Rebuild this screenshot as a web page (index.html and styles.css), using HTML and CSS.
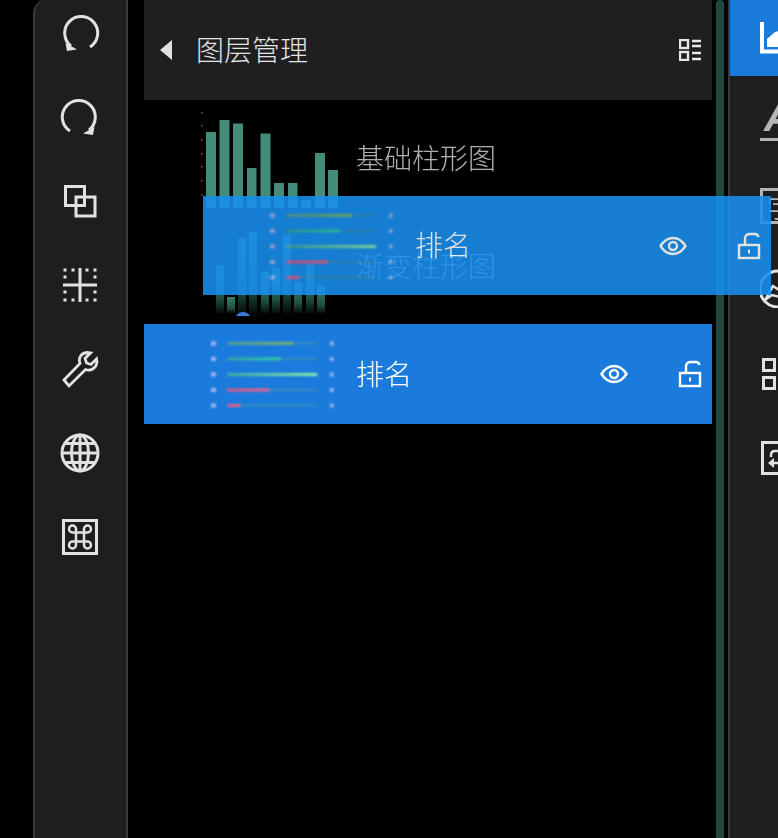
FILE: index.html
```html
<!DOCTYPE html>
<html lang="zh">
<head>
<meta charset="utf-8">
<title>图层管理</title>
<link rel="stylesheet" href="styles.css">
</head>
<body>
<svg class="defs" width="0" height="0" aria-hidden="true">
  <defs>
    <linearGradient id="g1" x1="0" x2="1" y1="0" y2="0"><stop offset="0" stop-color="#4f9f9a"/><stop offset="1" stop-color="#80b860"/></linearGradient>
    <linearGradient id="g2" x1="0" x2="1" y1="0" y2="0"><stop offset="0" stop-color="#3ba0a0"/><stop offset="1" stop-color="#2fd8a0"/></linearGradient>
    <linearGradient id="g3" x1="0" x2="1" y1="0" y2="0"><stop offset="0" stop-color="#3fa8a8"/><stop offset="1" stop-color="#90f0b0"/></linearGradient>
    <linearGradient id="g4" x1="0" x2="1" y1="0" y2="0"><stop offset="0" stop-color="#d8588c"/><stop offset="1" stop-color="#f0608c"/></linearGradient>
    <linearGradient id="fade" x1="0" x2="0" y1="0" y2="1"><stop offset="0" stop-color="#38806e"/><stop offset=".7" stop-color="#1f4f42"/><stop offset="1" stop-color="#050d0b"/></linearGradient>
    <filter id="soft" x="-5%" y="-5%" width="110%" height="110%"><feGaussianBlur stdDeviation=".8"/></filter>

    <symbol id="rank" viewBox="0 0 140 100">
      <g filter="url(#soft)">
        <g fill="#a4b4ee">
          <rect x="11" y="17.500" width="5" height="4"/><rect x="11" y="33" width="5" height="4"/><rect x="11" y="48.500" width="5" height="4"/><rect x="11" y="64" width="5" height="4"/><rect x="11" y="79.500" width="5" height="4"/>
          <rect x="130" y="17.500" width="3.500" height="4"/><rect x="130" y="33" width="3.500" height="4"/><rect x="130" y="48.500" width="3.500" height="4"/><rect x="130" y="64" width="3.500" height="4"/><rect x="130" y="79.500" width="3.500" height="4"/>
        </g>
        <g fill="#3f8fb0">
          <rect x="27" y="18.500" width="90" height="1.600"/><rect x="27" y="34" width="90" height="1.600"/><rect x="27" y="65" width="90" height="1.600"/><rect x="27" y="80.500" width="90" height="1.600"/>
        </g>
        <rect x="27" y="18" width="66" height="2.800" fill="url(#g1)"/>
        <rect x="27" y="33.500" width="54" height="2.800" fill="url(#g2)"/>
        <rect x="27" y="49" width="90" height="3" fill="url(#g3)"/>
        <rect x="27" y="64.500" width="42" height="3" fill="url(#g4)"/>
        <rect x="27" y="80" width="13" height="3" fill="url(#g4)"/>
      </g>
    </symbol>

    <symbol id="eye" viewBox="0 0 28 20">
      <path d="M1.500 10C5 4.500 9 2 14 2s9 2.500 12.500 8C23 15.500 19 18 14 18S5 15.500 1.500 10Z" fill="none" stroke="currentColor" stroke-width="2.400"/>
      <circle cx="14" cy="10" r="4" fill="none" stroke="currentColor" stroke-width="2.400"/>
    </symbol>

    <symbol id="lock" viewBox="0 0 24 28">
      <path d="M8 13V6.500C8 3.500 10 2 13 2h5c2 0 3 1 3.500 3" fill="none" stroke="currentColor" stroke-width="2.400"/>
      <rect x="2" y="13" width="20" height="13" fill="none" stroke="currentColor" stroke-width="2.400"/>
      <rect x="11" y="17.500" width="2" height="4" fill="currentColor"/>
    </symbol>
  </defs>
</svg>

<nav class="toolbar">
  <svg class="tool" viewBox="0 0 40 40"><path d="M30 34A16.500 16.500 0 1 0 11 33" class="ln"/><path d="M5.500 30L17 36.500L7 38Z" class="fl"/></svg>
  <svg class="tool" viewBox="0 0 40 40"><path d="M10 34A16.500 16.500 0 1 1 29 33" class="ln"/><path d="M34.500 30L23 36.500L33 38Z" class="fl"/></svg>
  <svg class="tool" viewBox="0 0 40 40"><rect x="5.500" y="5.500" width="19" height="19" class="ln"/><rect x="16" y="16" width="19" height="19" class="ln"/></svg>
  <svg class="tool" viewBox="0 0 40 40"><path d="M20 3V37M3 20H37" class="ln"/><path d="M3.500 5H6.500M11.500 5H14.500M25.500 5H28.500M33.500 5H36.500M3.500 12H6.500M33.500 12H36.500M3.500 27H6.500M33.500 27H36.500M3.500 35H6.500M11.500 35H14.500M25.500 35H28.500M33.500 35H36.500" class="ln"/></svg>
  <svg class="tool" viewBox="0 0 40 40"><path d="M4 31L20 14.500C18 9 21 4 27 3.500L30.500 4L25 9.500L26.500 14L31 15.500L36.500 10L37 13C36.500 19 31 22.500 25.500 20.500L9 37Z" class="ln joined"/></svg>
  <svg class="tool" viewBox="0 0 40 40"><circle cx="20" cy="20" r="18" class="ln"/><ellipse cx="20" cy="20" rx="8.500" ry="18" class="ln"/><path d="M20 2V38M2 20H38M5 10.500H35M5 29.500H35" class="ln"/></svg>
  <svg class="tool" viewBox="0 0 40 40"><rect x="3.500" y="3.500" width="33" height="33" class="ln"/><path d="M16 16V12A3.500 3.500 0 1 0 12.500 15.500H27.500A3.500 3.500 0 1 0 24 12V28A3.500 3.500 0 1 0 27.500 24.500H12.500A3.500 3.500 0 1 0 16 28Z" class="ln thin"/></svg>
</nav>

<main class="panel">
  <header class="panel-head">
    <span class="back"></span>
    <h1 class="panel-title">图层管理</h1>
    <svg class="list-icon" viewBox="0 0 22 22"><rect x="1" y="1" width="8" height="8" class="ln2"/><rect x="1" y="13" width="8" height="8" class="ln2"/><path d="M13 2H22M13 7H22M13 14H22M13 20H22" class="ln2"/></svg>
  </header>

  <ul class="layers">
    <li class="layer">
      <svg class="thumb" viewBox="0 0 140 100">
        <g fill="#5a6a66"><rect x="1" y="4" width="1.500" height="1.500"/><rect x="1" y="17" width="1.500" height="1.500"/><rect x="1" y="31" width="1.500" height="1.500"/><rect x="1" y="45" width="1.500" height="1.500"/><rect x="1" y="58" width="1.500" height="1.500"/><rect x="1" y="72" width="1.500" height="1.500"/><rect x="1" y="86" width="1.500" height="1.500"/></g>
        <g fill="#438c79">
          <rect x="6" y="24" width="10" height="76"/><rect x="19.500" y="12" width="10" height="88"/><rect x="33" y="15.500" width="10" height="84.500"/><rect x="47" y="60" width="9.500" height="40"/><rect x="60.500" y="25.500" width="10" height="74.500"/><rect x="74" y="75" width="10" height="25"/><rect x="88" y="75" width="9.500" height="25"/><rect x="101.500" y="92" width="9.500" height="8"/><rect x="115" y="45" width="10" height="55"/><rect x="128" y="62" width="10" height="38"/>
        </g>
      </svg>
      <span class="layer-name">基础柱形图</span>
    </li>
    <li class="layer">
      <svg class="thumb" viewBox="0 0 140 100">
        <defs><clipPath id="c"><rect width="140" height="100"/></clipPath></defs>
        <g clip-path="url(#c)">
          <g fill="url(#fade)">
            <rect x="16" y="49" width="8" height="48"/><rect x="27" y="81" width="8" height="16"/><rect x="38" y="22" width="8" height="75"/><rect x="49" y="16" width="8" height="81"/><rect x="61" y="56" width="8" height="41"/><rect x="72" y="52" width="8" height="45"/><rect x="83" y="19" width="8" height="78"/><rect x="94" y="66" width="8" height="31"/><rect x="106" y="49" width="8" height="48"/><rect x="117" y="70" width="8" height="27"/>
          </g>
          <circle cx="43" cy="104" r="8" fill="#3b7be0"/>
        </g>
      </svg>
      <span class="layer-name">渐变柱形图</span>
    </li>
    <li class="layer selected">
      <svg class="thumb"><use href="#rank"/></svg>
      <span class="layer-name">排名</span>
      <svg class="eye"><use href="#eye"/></svg>
      <svg class="lock"><use href="#lock"/></svg>
    </li>
  </ul>
</main>

<div class="scrollbar"></div>

<aside class="sidebar">
  <div class="side-item active">
    <svg class="side-icon" viewBox="0 0 40 40"><path d="M2 4V33.500H40" class="ln white"/><path d="M7 29V21L15 14L22 12L40 12V29Z" fill="#fff"/></svg>
  </div>
  <div class="side-item">
    <span class="side-a">A</span>
  </div>
  <div class="side-item">
    <span class="side-zi">字</span>
  </div>
  <div class="side-item">
    <svg class="side-icon" viewBox="0 0 40 40"><circle cx="18" cy="21" r="18" class="ln"/><path d="M5 32L13 18L19 22L25 14L20 29L12 27Z" class="ln thin"/></svg>
  </div>
  <div class="side-item">
    <svg class="side-icon" viewBox="0 0 40 40"><rect x="3.500" y="7.500" width="11" height="11" class="ln"/><rect x="3.500" y="25.500" width="11" height="11" class="ln"/></svg>
  </div>
  <div class="side-item">
    <svg class="side-icon" viewBox="0 0 40 40"><rect x="2.500" y="6.500" width="34" height="31" class="ln"/><path d="M28 15H15Q11 15 11 19V21M11 27H28" class="ln thin"/><path d="M8 27L14 22V32Z" class="fl"/></svg>
  </div>
</aside>

<div class="layer ghost">
  <svg class="thumb"><use href="#rank"/></svg>
  <span class="layer-name">排名</span>
  <svg class="eye"><use href="#eye"/></svg>
  <svg class="lock"><use href="#lock"/></svg>
</div>
</body>
</html>
```

FILE: styles.css
```css
* { box-sizing: border-box; }

html, body {
  margin: 0;
  height: 100%;
}

body {
  position: relative;
  display: flex;
  width: 778px;
  height: 838px;
  overflow: hidden;
  background: #000;
  font-family: "Noto Sans CJK SC", "Noto Sans", sans-serif;
  filter: blur(.35px);
}

.defs { position: absolute; }

.ln { fill: none; stroke: #e2e2e2; stroke-width: 3; }
.ln.thin { stroke-width: 2.500; }
.ln.joined { stroke-width: 2.800; }
.ln.white { stroke: #fff; stroke-width: 4; }
.ln2 { fill: none; stroke: #e8e8e8; stroke-width: 2.400; }
.fl { fill: #e2e2e2; }

.toolbar {
  flex: none;
  display: flex;
  flex-direction: column;
  align-items: flex-start;
  gap: 44px;
  width: 95px;
  height: 842px;
  margin: -2px 0 0 33px;
  padding: 15px 0 0 25px;
  background: #1e1e1e;
  border-left: 2px solid #3b3b3b;
  border-right: 2px solid #3b3b3b;
  border-top-left-radius: 16px;
}

.tool { flex: none; width: 40px; height: 40px; }

.panel {
  flex: none;
  width: 568px;
  margin-left: 16px;
}

.panel-head {
  display: flex;
  align-items: center;
  height: 100px;
  padding: 0 11px 0 16px;
  background: #1f1f1f;
}

.back {
  width: 0;
  height: 0;
  border-top: 10px solid transparent;
  border-bottom: 10px solid transparent;
  border-right: 12px solid #e0e0e0;
}

.panel-title {
  margin: 0 0 3px 24px;
  font-size: 28px;
  font-weight: 300;
  line-height: 40px;
  color: #e4e4e4;
}

.list-icon { width: 22px; height: 22px; margin-left: auto; }

.layers {
  display: flex;
  flex-direction: column;
  gap: 8px;
  margin: 8px 0 0;
  padding: 0;
  list-style: none;
}

.layer {
  display: flex;
  align-items: center;
  width: 568px;
  height: 100px;
  padding: 0 10px 0 56px;
  color: #b0b0b0;
}

.thumb { flex: none; width: 140px; height: 100px; margin-right: 16px; }

.layer-name {
  margin-bottom: 3px;
  font-size: 28px;
  font-weight: 300;
  line-height: 40px;
}

.selected { background: #1b7bdc; color: #fff; }

.eye { width: 28px; height: 20px; margin-left: auto; color: #fff; }
.lock { width: 24px; height: 28px; margin-left: 50px; color: #fff; }

.scrollbar {
  flex: none;
  width: 8px;
  margin-left: 4px;
  background: #1f4a40;
  border-radius: 4px 4px 0 0;
}

.sidebar {
  flex: none;
  width: 50px;
  height: 838px;
  margin-left: 4px;
  overflow: hidden;
  background: #1e1e1e;
  border-left: 2px solid #3b3b3b;
}

.side-item {
  display: flex;
  align-items: center;
  height: 84px;
  padding-left: 30px;
  color: #b4b4b4;
}

.side-item.active {
  height: 76px;
  background: #1b7bdc;
}

.side-item.active + .side-item { margin-top: 2px; }

.side-icon { flex: none; width: 40px; height: 40px; }

.side-a {
  flex: none;
  width: 48px;
  height: 42px;
  margin-top: -1px;
  padding-left: 4px;
  font-family: "Liberation Sans", sans-serif;
  font-size: 42px;
  font-style: italic;
  font-weight: 700;
  line-height: 36px;
  color: #b4b4b4;
  border-bottom: 3px solid #b4b4b4;
}

.side-zi {
  flex: none;
  width: 40px;
  height: 36px;
  margin-top: 4px;
  font-size: 26px;
  line-height: 32px;
  text-align: center;
  color: #b4b4b4;
  border: 3px solid #b4b4b4;
}

.ghost {
  position: absolute;
  left: 203px;
  top: 196px;
  height: 99px;
  background: #1890f0;
  opacity: .88;
  color: #fff;
}
```
